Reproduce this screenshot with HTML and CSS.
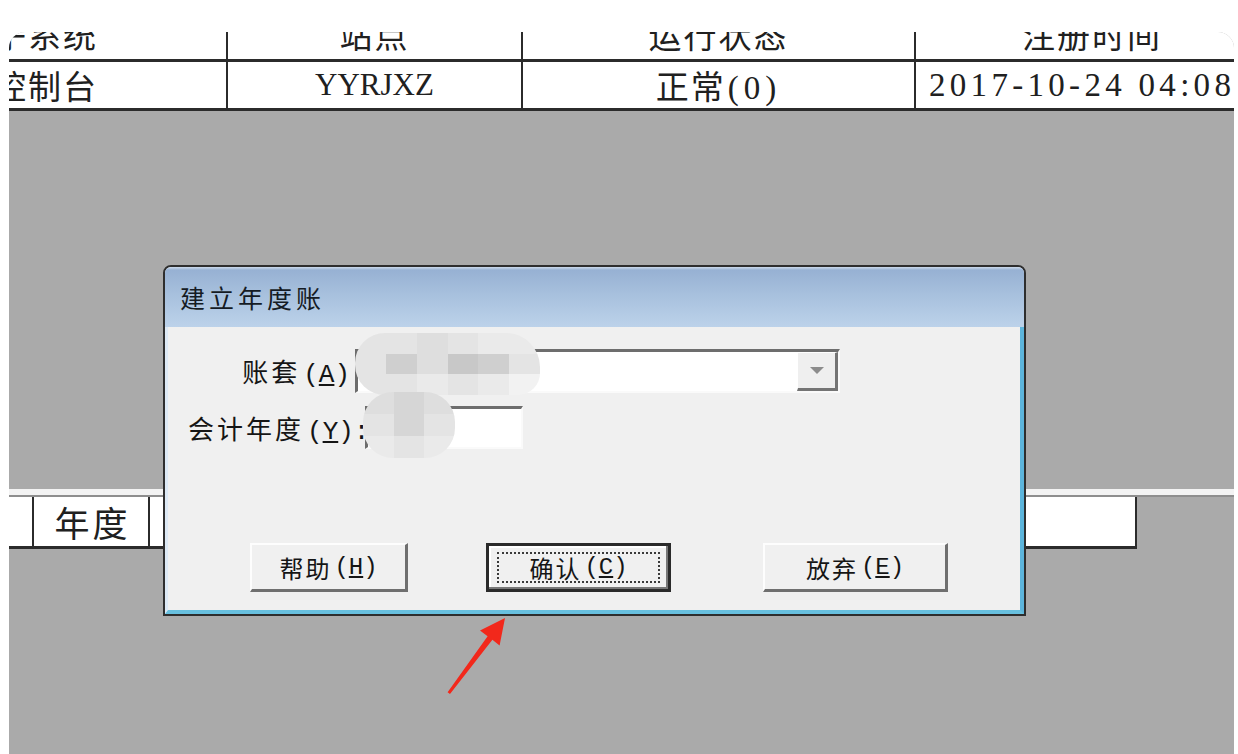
FILE: index.html
```html
<!DOCTYPE html>
<html lang="zh-CN">
<head>
<meta charset="utf-8">
<title>建立年度账</title>
<link rel="stylesheet" href="styles.css">
</head>
<body>
<div class="screen">
  <div class="grid-top">
    <div class="cell c1 head">子系统</div>
    <div class="cell c2 head">站点</div>
    <div class="cell c3 head">运行状态</div>
    <div class="cell c4 head">注册时间</div>
    <div class="cell c1">控制台</div>
    <div class="cell c2 latin">YYRJXZ</div>
    <div class="cell c3">正常<span class="latin paren">(0)</span></div>
    <div class="cell c4 latin date">2017-10-24 04:08</div>
  </div>

  <div class="lower">
    <div class="lower-rule"></div>
    <div class="lower-row">
      <div class="lcell lc1"></div>
      <div class="lcell lc2">年度</div>
      <div class="lcell lc3"></div>
    </div>
  </div>

  <div class="dialog">
    <div class="titlebar">建立年度账</div>
    <div class="client">
      <div class="row row-book">
        <div class="label label-book">账套<span class="key">(<u>A</u>)</span></div>
        <div class="combo">
          <div class="combo-field"></div>
          <div class="combo-btn"><span class="tri"></span></div>
        </div>
      </div>
      <div class="row row-year">
        <div class="label label-year">会计年度<span class="key">(<u>Y</u>):</span></div>
        <div class="year-input"></div>
      </div>
      <div class="buttons">
        <div class="btn btn-help">帮助<span class="key">(<u>H</u>)</span></div>
        <div class="btn btn-ok">确认<span class="key">(<u>C</u>)</span></div>
        <div class="btn btn-cancel">放弃<span class="key">(<u>E</u>)</span></div>
      </div>

      <div class="blob blob-a">
        <span class="g2"></span><span class="g2"></span><span class="g3"></span><span class="g2"></span><span class="g1"></span><span class="g1"></span>
        <span class="g2"></span><span class="g5"></span><span class="g3"></span><span class="g6"></span><span class="g5"></span><span class="g2"></span>
        <span class="g2"></span><span class="g2"></span><span class="g1"></span><span class="g2"></span><span class="g1"></span><span class="g0"></span>
      </div>
      <div class="blob blob-b">
        <span class="g3"></span><span class="g4"></span><span class="g3"></span>
        <span class="g2"></span><span class="g4"></span><span class="g2"></span>
        <span class="g1"></span><span class="g2"></span><span class="g1"></span>
      </div>
    </div>
  </div>

  <svg class="arrow" viewBox="9 32 1225 722" width="1225" height="722" aria-hidden="true">
    <polygon points="505,618 499.6,645.5 492.4,639.8 450,694 447.6,692.2 487.6,636.2 480,630.6" fill="#f2281b"/>
  </svg>
</div>
</body>
</html>
```

FILE: styles.css
```css
* { box-sizing: border-box; }
html, body { margin: 0; }
body {
  padding: 32px 0 0 9px;
  height: 754px;
  overflow: hidden;
  background: #fff;
  font-family: "Noto Sans CJK SC", "Liberation Sans", sans-serif;
  color: #1c1c1c;
}
.screen {
  position: relative;
  width: 1225px;
  height: 722px;
  background: #aaaaaa;
  border-radius: 16px 16px 0 0;
  overflow: hidden;
}

/* top table */
.grid-top {
  display: grid;
  grid-template-columns: 239px 295px 393px 354px;
  margin: -22px 0 0 -20px;
  font-size: 33px;
  letter-spacing: 2px;
  color: #202020;
}
.cell {
  background: #fff;
  border-right: 2px solid #2b2b2b;
  border-bottom: 3px solid #2b2b2b;
  height: 49px;
  line-height: 46px;
  text-align: center;
  white-space: nowrap;
  overflow: hidden;
}
.head { height: 52px; line-height: 48px; }
.c1 { text-align: left; padding-left: 4px; }
.latin { font-family: "Liberation Serif", serif; font-size: 31px; letter-spacing: 0; }
.paren { font-size: 33px; letter-spacing: 5px; margin-left: 2px; }
.date { font-size: 33px; letter-spacing: 4.3px; text-align: left; padding-left: 13px; }

/* lower table */
.lower { margin-top: 378px; }
.lower-rule {
  height: 8px;
  background: #f3f3f3;
  border-bottom: 2px solid #8e8e8e;
}
.lower-row {
  display: flex;
  width: 1128px;
  height: 52px;
  border-bottom: 3px solid #2b2b2b;
  font-size: 35px;
  letter-spacing: 3px;
  color: #202020;
}
.lcell {
  background: #fff;
  border-right: 2px solid #2b2b2b;
  line-height: 49px;
  text-align: center;
}
.lc1 { width: 25px; }
.lc2 { width: 116px; padding-left: 3px; }
.lc3 { flex: 1; }

/* dialog */
.dialog {
  position: absolute;
  left: 154px;
  top: 233px;
  width: 863px;
  height: 351px;
  border: 2px solid #2e2e2e;
  border-radius: 8px 8px 0 0;
  background: #f0f0f0;
  display: flex;
  flex-direction: column;
  overflow: hidden;
}
.titlebar {
  flex: none;
  height: 60px;
  padding-left: 15px;
  line-height: 60px;
  font-size: 25px;
  letter-spacing: 4px;
  color: #151b24;
  background: linear-gradient(#cddbec 0, #97b1d3 3px, #a7c0dd 45%, #bcd2ea 100%);
}
.client {
  flex: 1;
  position: relative;
  border-left: 3px solid #dde9f5;
  border-right: 4px solid #5cb5dc;
  border-bottom: 4px solid #68c0df;
  padding-top: 22px;
}
.row { display: flex; align-items: center; }
.label { font-size: 26px; letter-spacing: 3px; white-space: nowrap; color: #151515; }
.key {
  font-family: "Liberation Mono", monospace;
  letter-spacing: 0;
  margin-left: 3px;
}
.row-book { height: 44px; }
.label-book { width: 182px; text-align: right; margin-right: 5px; }
.combo {
  width: 485px;
  height: 44px;
  display: flex;
  background: #fff;
  border-top: 3px solid #6d6d6d;
  border-left: 3px solid #6d6d6d;
  border-right: 2px solid #fafafa;
  border-bottom: 2px solid #fafafa;
}
.combo-field { flex: 1; }
.combo-btn {
  width: 41px;
  display: flex;
  align-items: center;
  justify-content: center;
  background: #efefef;
  border-top: 1px solid #fff;
  border-left: 1px solid #fff;
  border-right: 3px solid #747474;
  border-bottom: 3px solid #747474;
}
.tri {
  width: 0;
  height: 0;
  border-left: 7px solid transparent;
  border-right: 7px solid transparent;
  border-top: 7px solid #8c8c8c;
}
.row-year { margin-top: 13px; height: 43px; padding-left: 20px; }
.label-year { width: 177px; }
.year-input {
  width: 158px;
  height: 43px;
  background: #fff;
  border-top: 3px solid #6d6d6d;
  border-left: 3px solid #6d6d6d;
  border-right: 2px solid #fafafa;
  border-bottom: 2px solid #fafafa;
}

.buttons { display: flex; margin-top: 94px; }
.btn {
  height: 49px;
  display: flex;
  align-items: center;
  justify-content: center;
  font-size: 24px;
  letter-spacing: 2px;
  color: #151515;
  background: #f0f0f0;
  border-top: 2px solid #fdfdfd;
  border-left: 2px solid #fdfdfd;
  border-right: 3px solid #6f6f6f;
  border-bottom: 3px solid #6f6f6f;
}
.btn-help { width: 158px; margin-left: 82px; }
.btn-ok {
  width: 185px;
  margin-left: 78px;
  position: relative;
  border: 3px solid #2a2a2a;
  box-shadow: inset -2px -2px 0 #777, inset 2px 2px 0 #fff;
}
.btn-ok::after {
  content: "";
  position: absolute;
  left: 8px;
  right: 8px;
  top: 6px;
  bottom: 6px;
  border: 2px dotted #3a3a3a;
}
.btn-cancel { width: 185px; margin-left: 92px; }

/* mosaic blur over private data */
.blob { position: absolute; display: grid; overflow: hidden; }
.blob-a {
  left: 187px;
  top: 6px;
  width: 185px;
  height: 62px;
  border-radius: 30px 34px 22px 30px;
  grid-template-columns: repeat(6, 1fr);
  grid-template-rows: repeat(3, 1fr);
}
.blob-b {
  left: 195px;
  top: 65px;
  width: 92px;
  height: 66px;
  border-radius: 30px;
  grid-template-columns: repeat(3, 1fr);
  grid-template-rows: repeat(3, 1fr);
}
.g0 { background: #f2f2f2; }
.g1 { background: #eaeaea; }
.g2 { background: #e4e4e4; }
.g3 { background: #dedede; }
.g4 { background: #d6d6d6; }
.g5 { background: #cfcfcf; }
.g6 { background: #c8c8c8; }

.arrow { position: absolute; left: 0; top: 0; }
```
